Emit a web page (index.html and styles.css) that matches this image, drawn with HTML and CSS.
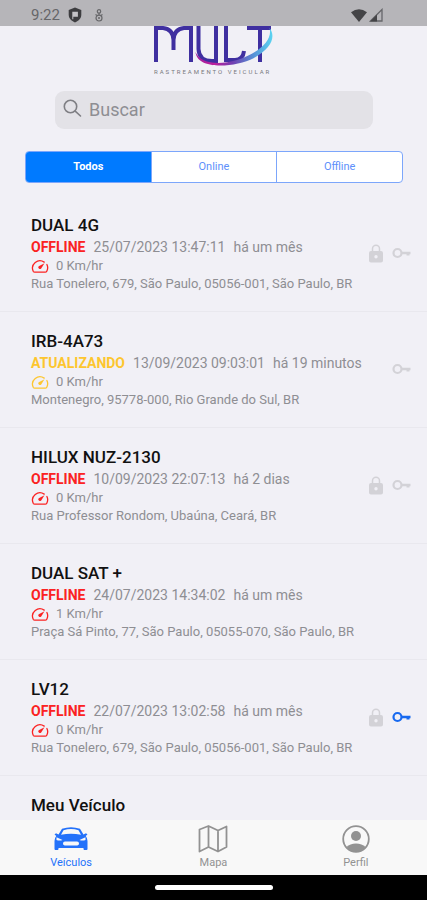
FILE: index.html
```html
<!DOCTYPE html>
<html lang="pt-BR">
<head>
<meta charset="utf-8">
<meta name="viewport" content="width=device-width, initial-scale=1">
<title>Veículos</title>
<link rel="stylesheet" href="styles.css">
</head>
<body>
<svg class="defs" width="0" height="0" aria-hidden="true">
  <symbol id="gauge" viewBox="0 0 18 14">
    <path d="M13.2 3.1A7.4 7.4 0 0 0 2.2 12.2q.5 1 1.600 1h10.400q1.100 0 1.600-1A7.400 7.400 0 0 0 15.900 5.500" fill="none" stroke="currentColor" stroke-width="1.300" stroke-linecap="round"/>
    <path d="M13.500 4.200 10.200 9.400a1.600 1.600 0 0 1-2.500-2.200z" fill="currentColor"/>
  </symbol>
  <symbol id="lock" viewBox="0 0 14 19">
    <path d="M3.500 8V4.800a3.500 3.500 0 0 1 7 0V8" fill="none" stroke="currentColor" stroke-width="1.500"/>
    <path fill-rule="evenodd" d="M2 7h10a2 2 0 0 1 2 2v7.500a2 2 0 0 1-2 2H2a2 2 0 0 1-2-2V9a2 2 0 0 1 2-2zm5 4a1.700 1.700 0 1 0 0 3.400A1.700 1.700 0 0 0 7 11z" fill="currentColor"/>
  </symbol>
  <symbol id="key" viewBox="0 0 19 12">
    <circle cx="5.500" cy="6" r="4" fill="none" stroke="currentColor" stroke-width="2.200"/>
    <path d="M9 4.800h9.500v2.400h-1V8.400h-3V7.200H9z" fill="currentColor"/>
  </symbol>
</svg>

<div class="app">
  <div class="statusbar">
    <div class="status-group">
      <span>9:22</span>
      <svg width="14" height="16" viewBox="0 0 14 16" aria-hidden="true"><path d="M7 .5 13.300 3v4.800c0 3.500-2.500 6.200-6.300 7.700C3.200 14 .7 11.300.7 7.800V3z" fill="#3d3d40"/><path d="M4.300 4.800h5.600v5H5.300v2.400h-1z" fill="#c4c3c7"/></svg>
      <svg class="touch" width="10" height="13" viewBox="0 0 10 13" aria-hidden="true"><g fill="none" stroke="#666669" stroke-width="1.200"><circle cx="5" cy="2.400" r="1.700"/><path d="M5 4v3M1.500 5.500l2.500 1.500M8.500 5.500 6 7"/><circle cx="5" cy="9" r="3"/></g><circle cx="5" cy="9" r="1" fill="#666669"/></svg>
    </div>
    <div class="status-group signals">
      <svg width="16" height="13" viewBox="0 0 16 13" aria-hidden="true"><path d="M0 3.300Q8-2.600 16 3.300L8 13z" fill="#444447"/></svg>
      <svg width="14" height="14" viewBox="0 0 14 14" aria-hidden="true"><path d="M13 1.500V13H1.500z" fill="none" stroke="#66666a" stroke-width="1.300"/><path d="M1 13.500 8 6.500v7z" fill="#444447"/></svg>
    </div>
  </div>

  <header class="header">
    <svg class="logo" viewBox="0 0 124 50" role="img" aria-label="MULT Rastreamento Veicular">
      <defs>
        <linearGradient id="swoosh" gradientUnits="userSpaceOnUse" x1="43" y1="0" x2="121" y2="0">
          <stop offset="0" stop-color="#a01f9f"/><stop offset=".25" stop-color="#bd209c"/><stop offset=".48" stop-color="#713eb1"/><stop offset=".75" stop-color="#5591d6"/><stop offset="1" stop-color="#5bd6f2"/>
        </linearGradient>
      </defs>
      <g fill="none" stroke="#3f2fa0" stroke-width="4">
        <path d="M4 36V2H11Q21 3 21.500 14V24M21.500 14Q22 3 32 2H39V36"/>
        <path d="M46.500 0V23Q47 35 60 35H64V0"/>
        <path d="M74 0V34H83Q91 34 92 25"/>
        <path d="M95 2H119M108 2V36"/>
      </g>
      <path d="M43.500 26C48 37 65 40 85 34C107 27 121 14 117.500 2C124 10 120 22 102 32C82 42 45 44 43.500 26Z" fill="url(#swoosh)"/>
      <text class="tagline" x="2" y="48">RASTREAMENTO VEICULAR</text>
    </svg>
    <label class="search">
      <svg width="19" height="19" viewBox="0 0 19 19" aria-hidden="true"><g fill="none" stroke="#7f7f84" stroke-width="1.600" stroke-linecap="round"><circle cx="7.500" cy="7.500" r="6.200"/><path d="m12.200 12.200 5.300 4.800"/></g></svg>
      <input type="search" placeholder="Buscar" aria-label="Buscar">
    </label>
    <div class="segments">
      <button type="button" class="segment active" aria-pressed="true">Todos</button>
      <button type="button" class="segment" aria-pressed="false">Online</button>
      <button type="button" class="segment" aria-pressed="false">Offline</button>
    </div>
  </header>

  <main class="list">
    <article class="vehicle">
      <div class="info">
        <h2>DUAL 4G</h2>
        <p class="state"><strong class="offline">OFFLINE</strong><span>25/07/2023 13:47:11</span><span>há um mês</span></p>
        <p class="speed"><svg class="offline"><use href="#gauge"/></svg>0 Km/hr</p>
        <p class="address">Rua Tonelero, 679, São Paulo, 05056-001, São Paulo, BR</p>
      </div>
      <div class="flags"><svg class="lock"><use href="#lock"/></svg><svg class="key"><use href="#key"/></svg></div>
    </article>
    <article class="vehicle">
      <div class="info">
        <h2>IRB-4A73</h2>
        <p class="state"><strong class="updating">ATUALIZANDO</strong><span>13/09/2023 09:03:01</span><span>há 19 minutos</span></p>
        <p class="speed"><svg class="updating"><use href="#gauge"/></svg>0 Km/hr</p>
        <p class="address">Montenegro, 95778-000, Rio Grande do Sul, BR</p>
      </div>
      <div class="flags"><svg class="key"><use href="#key"/></svg></div>
    </article>
    <article class="vehicle">
      <div class="info">
        <h2>HILUX NUZ-2130</h2>
        <p class="state"><strong class="offline">OFFLINE</strong><span>10/09/2023 22:07:13</span><span>há 2 dias</span></p>
        <p class="speed"><svg class="offline"><use href="#gauge"/></svg>0 Km/hr</p>
        <p class="address">Rua Professor Rondom, Ubaúna, Ceará, BR</p>
      </div>
      <div class="flags"><svg class="lock"><use href="#lock"/></svg><svg class="key"><use href="#key"/></svg></div>
    </article>
    <article class="vehicle">
      <div class="info">
        <h2>DUAL SAT +</h2>
        <p class="state"><strong class="offline">OFFLINE</strong><span>24/07/2023 14:34:02</span><span>há um mês</span></p>
        <p class="speed"><svg class="offline"><use href="#gauge"/></svg>1 Km/hr</p>
        <p class="address">Praça Sá Pinto, 77, São Paulo, 05055-070, São Paulo, BR</p>
      </div>
    </article>
    <article class="vehicle">
      <div class="info">
        <h2>LV12</h2>
        <p class="state"><strong class="offline">OFFLINE</strong><span>22/07/2023 13:02:58</span><span>há um mês</span></p>
        <p class="speed"><svg class="offline"><use href="#gauge"/></svg>0 Km/hr</p>
        <p class="address">Rua Tonelero, 679, São Paulo, 05056-001, São Paulo, BR</p>
      </div>
      <div class="flags"><svg class="lock"><use href="#lock"/></svg><svg class="key on"><use href="#key"/></svg></div>
    </article>
    <article class="vehicle">
      <div class="info">
        <h2>Meu Veículo</h2>
      </div>
    </article>
  </main>

  <nav class="tabs">
    <a class="tab active" href="#veiculos">
      <svg width="34" height="28" viewBox="0 0 34 28" aria-hidden="true"><path fill-rule="evenodd" d="M4.500 9.500 8 3.800Q17 .5 26 3.800L29.500 9.500 32 8.200l1.500 1.300-1.800 1.500q1.800 2 1.800 5v8q0 1-1 1h-2q-1 0-1-1V23h-25v1q0 1-1 1h-2q-1 0-1-1V16q0-3 1.800-5L.5 9.500 2 8.200zM7 9.800q10-2.300 20 0l-2.500-4.600Q17 2.700 9.500 5.200zM2.500 12.200l6 2.800q-3 1.200-6 0zm29 0L25.500 15q3 1.200 6 0zM11 16.500q-2 0-2 2Q9 20.500 12 20.500h10q3 0 3-2 0-2-2-2z" fill="currentColor"/></svg>
      <span>Veículos</span>
    </a>
    <a class="tab" href="#mapa">
      <svg width="30" height="28" viewBox="0 0 30 28" aria-hidden="true"><path d="M1.500 4.500 10.500 1l9.500 4.500L28.500 1.500V22L20 26.500 10.500 22l-9 4.500zM10.500 1v21M20 5.500v21" fill="none" stroke="currentColor" stroke-width="1.800" stroke-linejoin="round"/></svg>
      <span>Mapa</span>
    </a>
    <a class="tab" href="#perfil">
      <svg width="28" height="28" viewBox="0 0 28 28" aria-hidden="true"><circle cx="14" cy="14" r="12.800" fill="none" stroke="currentColor" stroke-width="1.800"/><circle cx="14" cy="11" r="5" fill="currentColor"/><path d="M4.500 22Q8 18.500 14 18.500T23.500 22Q20 27 14 27T4.500 22z" fill="currentColor"/></svg>
      <span>Perfil</span>
    </a>
  </nav>
  <div class="homebar"><div class="handle"></div></div>
</div>
</body>
</html>
```
FILE: styles.css
```css
* {
  box-sizing: border-box;
}

body {
  margin: 0;
  background: #f1f0f6;
  color: #8e8e93;
  font-family: Roboto, "Liberation Sans", sans-serif;
}

.defs {
  position: absolute;
}

.app {
  display: flex;
  flex-direction: column;
  height: 100vh;
  overflow: hidden;
}

.statusbar {
  display: flex;
  justify-content: space-between;
  align-items: center;
  flex: none;
  height: 26px;
  padding: 4px 44px 0 31px;
  background: #b6b5b9;
  color: #666669;
  font-size: 15px;
}

.status-group {
  display: flex;
  align-items: center;
  gap: 8px;
}

.touch {
  margin-left: 4px;
}

.signals {
  gap: 2px;
}

.header {
  display: flex;
  flex-direction: column;
  align-items: center;
  flex: none;
  padding: 0 24px 13px 25px;
}

.logo {
  width: 124px;
  height: 50px;
}

.tagline {
  fill: #77777c;
  font-size: 6px;
  letter-spacing: 2px;
}

.search {
  display: flex;
  align-items: center;
  gap: 7px;
  width: calc(100% - 60px);
  height: 38px;
  margin-top: 15px;
  padding: 0 8px;
  border-radius: 9px;
  background: #e3e2e7;
}

.search svg {
  flex: none;
  margin-bottom: 4px;
}

.search input {
  flex: 1;
  min-width: 0;
  padding: 0;
  border: 0;
  outline: 0;
  background: none;
  color: #77777c;
  font: 18px/24px Roboto, "Liberation Sans", sans-serif;
}

.search input::placeholder {
  color: #8e8e93;
}

.segments {
  display: flex;
  width: 100%;
  height: 32px;
  margin-top: 22px;
  border: 1px solid #7ca6fb;
  border-radius: 4px;
  background: #fff;
  overflow: hidden;
}

.segment {
  flex: 1;
  padding: 0 0 1px;
  border: 0;
  border-left: 1px solid #7ca6fb;
  background: none;
  color: #5e90fb;
  font: 11px/16px Roboto, "Liberation Sans", sans-serif;
}

.segment.active {
  border-left: 0;
  background: #007aff;
  color: #fff;
  font-weight: 700;
}

.list {
  flex: 1;
  min-height: 0;
  overflow: hidden;
}

.vehicle {
  display: flex;
  align-items: center;
  justify-content: space-between;
  padding: 17px 16px 18px 31px;
  border-bottom: 1px solid #e9e8ee;
}

.info {
  min-width: 0;
}

.info h2 {
  margin: 0;
  color: #111;
  font-size: 17px;
  font-weight: 500;
  line-height: 24px;
}

.info p {
  margin: 0;
  font-size: 13px;
  line-height: 18px;
  white-space: nowrap;
}

.info .state {
  display: flex;
  gap: 8px;
  font-size: 14px;
  line-height: 20px;
}

.state strong {
  font-weight: 700;
}

.offline {
  color: #fb2222;
}

.updating {
  color: #fdc62f;
}

.speed {
  display: flex;
  align-items: center;
  gap: 7px;
}

.speed svg {
  width: 18px;
  height: 14px;
}

.flags {
  display: flex;
  align-items: center;
  gap: 9px;
  color: #d3d2d7;
}

.lock {
  width: 14px;
  height: 19px;
}

.key {
  width: 19px;
  height: 12px;
}

.key.on {
  color: #1769f0;
}

.tabs {
  display: flex;
  flex: none;
  height: 55px;
  background: #f8f8f8;
}

.tab {
  display: flex;
  flex: 1;
  flex-direction: column;
  align-items: center;
  gap: 3px;
  padding-top: 5px;
  color: #929292;
  font-size: 11px;
  line-height: 14px;
  text-decoration: none;
}

.tab.active {
  color: #2472fa;
}

.homebar {
  display: flex;
  align-items: center;
  justify-content: center;
  flex: none;
  height: 25px;
  background: #000;
}

.handle {
  width: 118px;
  height: 5px;
  border-radius: 3px;
  background: #fff;
}
```
